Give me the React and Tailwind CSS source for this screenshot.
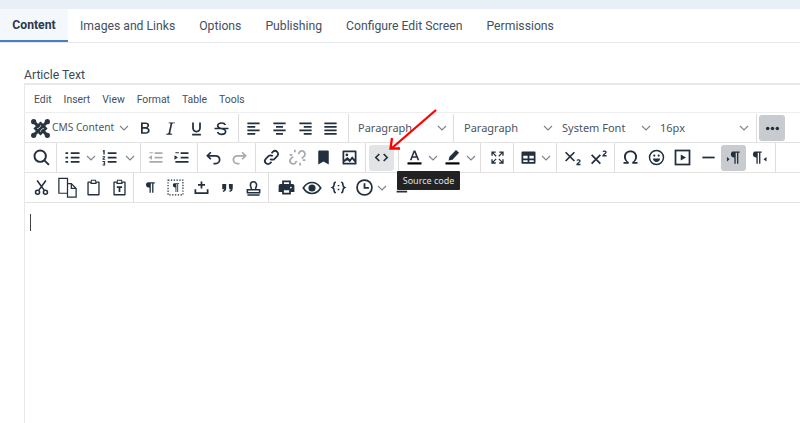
const P = ({ d, c = "" }) => (
  <svg viewBox="0 0 24 24" className={"w-[21px] h-[21px] fill-[#222f3e] " + c}><path d={d} /></svg>
);
const S = ({ children, c = "", w = "2" }) => (
  <svg viewBox="0 0 24 24" fill="none" stroke="#222f3e" strokeWidth={w} className={"w-[21px] h-[21px] " + c}>{children}</svg>
);
const Chev = ({ c = "w-[13px]" }) => (
  <span className={"flex justify-center items-center shrink-0 " + c}>
    <svg viewBox="0 0 10 10" className="w-[10px] h-[10px]" fill="none" stroke="#7a8490" strokeWidth="1.1"><path d="M1 3l4 4 4-4" /></svg>
  </span>
);
const B = ({ children, active, hover, c = "w-[26px]" }) => (
  <span className={"h-[26px] flex items-center justify-center shrink-0 rounded-[3px] " + c + (active ? " bg-[#c8cbcf]" : hover ? " bg-[#e3e4e6]" : "")}>{children}</span>
);
const G = ({ children, c = "pl-[3px] pr-[2px]" }) => (
  <div className={"flex items-center shrink-0 h-full border-r border-[#dddddd] " + c}>{children}</div>
);
const Row = ({ children, c = "" }) => (
  <div className={"flex items-center h-[30px] border-b border-[#e3e3e3] shrink-0 " + c}>{children}</div>
);
const Sel = ({ label, c, size = "text-[11px]" }) => (
  <span className={"flex items-center justify-between h-[26px] shrink-0 whitespace-nowrap text-[#4a5562] " + size + " " + c}>
    <span>{label}</span>
    <Chev />
  </span>
);

const lines = {
  left: "M5 5h14v2H5zM5 9h9v2H5zM5 13h14v2H5zM5 17h9v2H5z",
  center: "M5 5h14v2H5zM8 9h8v2H8zM5 13h14v2H5zM8 17h8v2H8z",
  right: "M5 5h14v2H5zM10 9h9v2h-9zM5 13h14v2H5zM10 17h9v2h-9z",
  just: "M5 5h14v2H5zM5 9h14v2H5zM5 13h14v2H5zM5 17h14v2H5z",
};
const clip = "M9 3h6v2h3a1 1 0 0 1 1 1v14a1 1 0 0 1-1 1H6a1 1 0 0 1-1-1V6a1 1 0 0 1 1-1h3zm1 1.300V6.500h4V4.300zM6.500 6.500V19.500h11V6.500H15.500V8h-7V6.500z";

const Joomla = () => (
  <svg viewBox="0 0 24 24" className="w-[21px] h-[21px]" fill="none" stroke="#2a3542">
    <path strokeWidth="3.4" d="M5 5l14 14M19 5L5 19" />
    <path strokeWidth="3" d="M12 6l6 6-6 6-6-6z" />
    <path strokeWidth="1" stroke="#ffffff" d="M9.500 12L12 9.500M12 14.500L14.500 12" />
    <g fill="#2a3542" stroke="none">
      <circle cx="4.200" cy="4.200" r="3" /><circle cx="19.800" cy="4.200" r="3" /><circle cx="4.200" cy="19.800" r="3" /><circle cx="19.800" cy="19.800" r="3" />
    </g>
  </svg>
);

export default function App() {
  return (
    <div className="relative w-[800px] h-[423px] overflow-hidden bg-white font-['Roboto',sans-serif]">
      <div className="h-[9px] bg-[#e9eff7]" />
      <div className="flex h-[34px] border-b border-[#e6e8f0] text-[12.2px] text-[#44505f]">
        <div className="w-[68px] h-[33px] pt-[1px] flex items-center justify-center font-bold text-[#2c3a4b] bg-[#f4f7fb] border-b-[2px] border-[#4a7ebf]">Content</div>
        <div className="flex items-center pt-[1px] pl-[12px] gap-[24px]">
          <span>Images and Links</span>
          <span>Options</span>
          <span>Publishing</span>
          <span>Configure Edit Screen</span>
          <span>Permissions</span>
        </div>
      </div>

      <div className="pl-[24px] pt-[23px]">
        <div className="h-[17px] pt-[1px] text-[12.2px] leading-[17px] text-[#3d4956]">Article Text</div>
        <div className="w-[790px] h-[340px] border-l border-t-[2px] border-[#e8e8e8] flex flex-col">
          <div className="h-[28px] pt-[3px] flex items-center gap-[12px] pl-[9px] text-[10.4px] text-[#44505f] border-b border-[#eeeeee] shrink-0">
            <span>Edit</span><span>Insert</span><span>View</span><span>Format</span><span>Table</span><span>Tools</span>
          </div>

          <div className="font-['Noto_Sans',sans-serif]">
            <Row c="pt-[1px]">
              <G c="w-[214px] pl-[5px]">
                <Joomla />
                <Sel label="CMS Content" size="text-[10.2px]" c="w-[78px] ml-[1px]" />
                <span className="w-[1px] shrink-0" />
                <B><P d="M8 5h5.200c2.600 0 4.100 1.200 4.100 3.300 0 1.400-.8 2.400-2 2.900 1.600.4 2.600 1.600 2.600 3.200 0 2.400-1.700 3.600-4.400 3.600H8zm2 5.300h3c1.500 0 2.300-.6 2.300-1.800S14.500 6.800 13 6.800h-3zm0 5.900h3.400c1.600 0 2.500-.7 2.500-2 0-1.200-.9-2-2.500-2H10z" /></B>
                <B><P d="M10 5h7v1h-1.500c-1 0-1.500.4-1.700 1.300l-2 9.400c-.2 1 .3 1.300 1.200 1.300h1l-.2 1H7l.2-1h1c1 0 1.500-.4 1.700-1.300l2-9.400c.2-1-.2-1.300-1.200-1.300h-1z" /></B>
                <B><P d="M7 5h2v6.500c0 2 1.200 3 3 3s3-1 3-3V5h2v6.500c0 3.200-2 5-5 5s-5-1.800-5-5zM7 18h10v2H7z" /></B>
                <B c="w-[26px] -ml-[1px]"><S><path strokeWidth="1.900" d="M16.500 8c-.7-1.500-2.300-2.300-4.300-2.300-2.700 0-4.500 1.300-4.500 3.200 0 1.500 1 2.500 4 3.100 3.500.7 5 1.700 5 3.500 0 2-2 3.200-4.500 3.200-2.300 0-4-1-4.700-2.700M4 12h16" /></S></B>
              </G>
              <G c="w-[110px] pl-[2px]">
                <B c="w-[25.700px]"><P d={lines.left} /></B><B c="w-[25.700px]"><P d={lines.center} /></B><B c="w-[25.700px]"><P d={lines.right} /></B><B c="w-[25.700px]"><P d={lines.just} /></B>
              </G>
              <G c="w-[105px] pl-[9px] pr-[5px]"><Sel label="Paragraph" c="w-full" /></G>
              <div className="flex items-center h-full w-[303px] border-r border-[#dddddd] pl-[10px] shrink-0">
                <Sel label="Paragraph" c="w-[90px]" />
                <Sel label="System Font" c="w-[98px] pl-[8px]" />
                <Sel label="16px" c="w-[98px] pl-[8px]" />
              </div>
              <div className="pl-[2px] flex items-center">
                <B active><svg viewBox="0 0 24 24" className="w-[21px] h-[21px] fill-[#222f3e]"><circle cx="6.500" cy="12" r="2" /><circle cx="12" cy="12" r="2" /><circle cx="17.500" cy="12" r="2" /></svg></B>
              </div>
            </Row>

            <Row>
              <G>
                <B><S w="2.200"><circle cx="10.500" cy="10.500" r="6.500" /><path d="M15 15l5.500 5.500" /></S></B>
              </G>
              <G c="pl-[3px] w-[84px]">
                <B c="w-[24px]"><P d="M10 6h10v2H10zM10 11h10v2H10zM10 16h10v2H10zM4 6h3v2H4zM4 11h3v2H4zM4 16h3v2H4z" /></B>
                <Chev />
                <B c="w-[24px]"><P d="M10 6h10v2H10zM10 11h10v2H10zM10 16h10v2H10zM5 3.500h1.500v5H5V5H4zM4 10.500h3v1l-1.600 2H7v1H4v-1l1.700-2H4zM4 16h3v5H4v-1h2v-1H5v-1h1v-1H4z" /></B>
                <Chev c="w-[17px]" />
              </G>
              <G c="w-[57px] pl-[1px]">
                <B><P c="opacity-40" d="M11 6h9v2h-9zM11 11h9v2h-9zM5 16h15v2H5zM5 6h4v1H5zM8 9.500v5l-4-2.500z" /></B>
                <B><P d="M11 6h9v2h-9zM11 11h9v2h-9zM5 16h15v2H5zM5 6h4v1H5zM4 9.500v5l4-2.500z" /></B>
              </G>
              <G c="w-[58px] pl-[2px]">
                <B><S><path d="M9 6L5 10l4 4M5 10h9c3 0 5 2 5 4.500S17 19 14.500 19H12" /></S></B>
                <B><S c="opacity-40"><path d="M15 6l4 4-4 4M19 10h-9c-3 0-5 2-5 4.500S7 19 9.500 19H12" /></S></B>
              </G>
              <G c="w-[110px] pl-[2px]">
                <B><S><path d="M10.500 13.500a3.500 3.500 0 0 0 5 0l3-3a3.500 3.500 0 0 0-5-5l-1.500 1.500M13.500 10.500a3.500 3.500 0 0 0-5 0l-3 3a3.500 3.500 0 0 0 5 5L12 17" /></S></B>
                <B><S c="opacity-40"><path d="M13 8l1.500-2.300a3.500 3.500 0 0 1 5 5l-2.500 2.300M11 16l-1.500 2.300a3.500 3.500 0 0 1-5-5L7 11M9 3v3M15 18v3M3 9h3M18 15h3" /></S></B>
                <B><P d="M7 4h10a1 1 0 0 1 1 1v15l-6-3.500L6 20V5a1 1 0 0 1 1-1z" /></B>
                <B><P d="M5 4h14a1 1 0 0 1 1 1v14a1 1 0 0 1-1 1H5a1 1 0 0 1-1-1V5a1 1 0 0 1 1-1zm1 2v8.500l3.500-3 3 2.500 2.500-3.500 3 3.500V6zm0 12h12v-.5l-3-3.500-2.500 3.500-3-2.500L6 17zM9 7.500a1.500 1.500 0 1 1 0 3 1.500 1.500 0 0 1 0-3z" /></B>
              </G>
              <G c="w-[33px] pl-[3px]">
                <B hover c="w-[25px]"><S w="1.900"><path d="M9.500 8l-4 4 4 4M14.500 8l4 4-4 4" /></S></B>
              </G>
              <G c="w-[82px] pl-[2px]">
                <B><svg viewBox="0 0 24 24" className="w-[21px] h-[21px]"><path fill="#222f3e" d="M11 4h2l4.500 11h-2l-1-2.700h-4.800L8.700 15h-2zm-.8 6.600h3.400L12 6.200z" /><path fill="#000" d="M4 17.500h16v2.500H4z" /></svg></B>
                <Chev c="w-[12px]" />
                <B><svg viewBox="0 0 24 24" className="w-[21px] h-[21px]"><path fill="#222f3e" d="M16 3.500l3.500 3-7.500 8-4.500 1 1-4.500z" /><path fill="#000" d="M4 17.500h16v2.500H4z" /></svg></B>
                <Chev c="w-[12px]" />
              </G>
              <G c="w-[33px] pl-[3px]">
                <B><P d="M5 5h5v1.500H7.500L11 10l-1 1-3.500-3.500V10H5zM14 5h5v5h-1.500V7.500L14 11l-1-1 3.500-3.500H14zM10 13l1 1-3.500 3.500H10V19H5v-5h1.500v2.500zM14 13l3.500 3.500V14H19v5h-5v-1.500h2.500L13 14z" /></B>
              </G>
              <G c="w-[43px] pl-[2px]">
                <B c="w-[24px]"><P d="M5 5h14a1 1 0 0 1 1 1v12a1 1 0 0 1-1 1H5a1 1 0 0 1-1-1V6a1 1 0 0 1 1-1zm1 5v3h5v-3zm7 0v3h5v-3zm-7 5v2h5v-2zm7 0v2h5v-2z" /></B>
                <Chev c="w-[11px]" />
              </G>
              <G c="w-[58px] pl-[3px]">
                <B><svg viewBox="0 0 24 24" className="w-[21px] h-[21px]" fill="none" stroke="#222f3e"><path strokeWidth="2" d="M3 6l10 10M13 6L3 16" /><path strokeWidth="1.500" d="M16 15.500c.5-1 3.500-1 3.500.5 0 1.500-3.500 2.500-3.500 4h4" /></svg></B>
                <B><svg viewBox="0 0 24 24" className="w-[21px] h-[21px]" fill="none" stroke="#222f3e"><path strokeWidth="2" d="M3 9l10 10M13 9L3 19" /><path strokeWidth="1.500" d="M16 5.500c.5-1 3.500-1 3.500.5 0 1.500-3.500 2.500-3.500 4h4" /></svg></B>
              </G>
              <G c="w-[161px] pl-[2px]">
                <B><P d="M12 4c4.400 0 7.500 3 7.500 7 0 2.600-1.300 4.700-3 6H20v2h-6v-2c2-1 3.300-3.300 3.300-6 0-3-2.200-5-5.300-5s-5.300 2-5.300 5c0 2.700 1.300 5 3.300 6v2H4v-2h3.500c-1.700-1.300-3-3.400-3-6 0-4 3.100-7 7.500-7z" /></B>
                <B><svg viewBox="0 0 24 24" className="w-[21px] h-[21px]" fill="none" stroke="#222f3e" strokeWidth="1.700"><circle cx="12" cy="12" r="8" /><path fill="#222f3e" stroke="none" d="M8 13h8c0 2.300-1.800 4-4 4s-4-1.700-4-4zM9.500 8.500a1.300 1.300 0 1 1 0 2.600 1.300 1.300 0 0 1 0-2.600zM14.500 8.500a1.300 1.300 0 1 1 0 2.600 1.300 1.300 0 0 1 0-2.600z" /></svg></B>
                <B><svg viewBox="0 0 24 24" className="w-[21px] h-[21px]" fill="none" stroke="#222f3e" strokeWidth="2"><rect x="4" y="4" width="16" height="16" /><path fill="#222f3e" stroke="none" d="M10 8.500l6 3.500-6 3.500z" /></svg></B>
                <B><P d="M5 11h14v2H5z" /></B>
                <B active c="w-[25px]"><P d="M11 5h8v1.500h-1.500V19H16V6.500h-1.500V19H13v-7c-2.500 0-4-1.500-4-3.500S10 5 11 5zM4.500 11.500l3 2.500-3 2.500z" /></B>
                <B><P d="M6.500 5h8v1.500H13V19h-1.500V6.500H10V19H8.500v-7C6 12 4.500 10.500 4.500 8.500S5.500 5 6.500 5zM20 11.500v5l-3.500-2.500z" /></B>
              </G>
            </Row>

            <Row>
              <div className="flex items-center h-full shrink-0 pl-[3px]">
                <B><svg viewBox="0 0 24 24" className="w-[21px] h-[21px]" fill="none" stroke="#222f3e" strokeWidth="1.800"><path d="M7 4l8 11M17 4L9 15" /><circle cx="7.500" cy="17.500" r="2.300" /><circle cx="16.500" cy="17.500" r="2.300" /></svg></B>
              </div>
              <div className="flex items-center h-full border-r border-[#dddddd] w-[80px] shrink-0">
                <B><svg viewBox="0 0 24 24" className="w-[23px] h-[23px]" fill="#fff" stroke="#222f3e" strokeWidth="1.300"><path d="M3 2.500h9l0 15.500H3zM12 8h4l5 5v9H12z" /><path fill="none" d="M16 8v5h5" /></svg></B>
                <B><P d={clip} /></B>
                <B><P d={clip + "M9 10.500h6v2h-2v4.500h-2v-4.500H9z"} /></B>
              </div>
              <G c="w-[135px] pl-[2px]">
                <B><P d="M10.500 6H18v1.500h-1.500V18H15V7.500h-1.500V18H12v-6c-2.500 0-4-1.200-4-3s1-3 2.500-3z" /></B>
                <B><svg viewBox="0 0 24 24" className="w-[21px] h-[21px]"><rect x="3.500" y="3.500" width="17" height="17" fill="none" stroke="#222f3e" strokeWidth="1.300" strokeDasharray="1.600 1.600" /><path fill="#222f3e" d="M10.500 7H16v1h-1v9h-1V8h-1v9h-1v-5c-2 0-3-1-3-2.500S9.500 7 10.500 7z" /></svg></B>
                <B><P d="M11 5h2v3h3v2h-3v3h-2v-3H8V8h3zM4 14h2v3.500h12V14h2v5.500H4z" /></B>
                <B><P d="M6 8h4.500v4.500c0 2.500-1.200 4-3.500 4.500l-.5-1.200c1-.3 1.700-1 1.800-1.800H6zM13.500 8H18v4.500c0 2.500-1.200 4-3.500 4.500l-.5-1.200c1-.3 1.700-1 1.800-1.800h-1.800z" /></B>
                <B><S w="1.800"><path d="M9.500 14.500c.5-2-1-3-1-5.500a3.500 3.500 0 1 1 7 0c0 2.500-1.500 3.500-1 5.500M5 14.500h14V18H5zM5 20.500h14" /></S></B>
              </G>
              <div className="flex items-center h-full pl-[4px] shrink-0">
                <B><P d="M7 4h10v4h2a2 2 0 0 1 2 2v7h-4v3H7v-3H3v-7a2 2 0 0 1 2-2h2zm2 2v2h6V6zm0 9v3h6v-3zm8-4a1 1 0 1 0 0 2 1 1 0 0 0 0-2z" /></B>
                <B><svg viewBox="0 0 24 24" className="w-[22px] h-[22px]" fill="none" stroke="#222f3e" strokeWidth="1.800"><path d="M2.500 12C5 8 8 6 12 6s7 2 9.500 6c-2.500 4-5.500 6-9.500 6s-7-2-9.500-6z" /><circle cx="12" cy="12" r="3" fill="#222f3e" /></svg></B>
                <B><svg viewBox="0 0 24 24" className="w-[21px] h-[21px]" fill="none" stroke="#222f3e" strokeWidth="1.800"><path d="M9 6c-2 0-2 1-2 2.500S7 11 5 12c2 1 2 2 2 3.500S7 18 9 18M15 6c2 0 2 1 2 2.500S17 11 19 12c-2 1-2 2-2 3.500S17 18 15 18M12 9v1.500M12 13.500V15" /></svg></B>
                <B><S><circle cx="12" cy="12" r="8.500" /><path d="M12 7v5.500h5" /></S></B>
                <Chev c="w-[10px]" />
                <B c="w-[26px] ml-[4px] -mt-[4px]"><P d="M12 5h8v2h-3l-2 6h-2l2-6h-3zM3 18h12v2H3z" /></B>
              </div>
            </Row>
          </div>

          <div className="flex-1 relative">
            <div className="ml-[5px] mt-[11px] w-[1px] h-[17px] bg-[#444444]" />
          </div>
        </div>
      </div>

      <div className="absolute left-[397px] top-[171px] w-[63px] h-[19px] bg-[#222222] text-[#e0e0e0] text-[9px] flex items-center justify-center rounded-[1px] font-['Noto_Sans',sans-serif]">Source code</div>
      <svg className="absolute left-[380px] top-[100px] w-[70px] h-[60px]" viewBox="0 0 70 60" fill="none" stroke="#ff0000" strokeWidth="2.300">
        <path d="M56 10L12 48" />
        <path d="M20 48.500H10.500L12 38" />
      </svg>
    </div>
  );
}
